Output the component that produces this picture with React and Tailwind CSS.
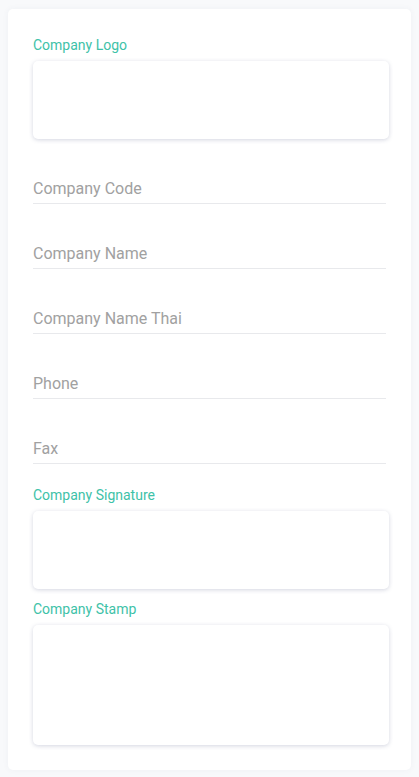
import React from "react";

function UploadBox({ label, height, className = "" }) {
  return (
    <div className={className}>
      <div className="text-[14px] leading-[20px] text-[#3ec2a8]">{label}</div>
      <div
        className={`mt-[6px] ${height} w-full rounded-[5px] bg-white shadow-[0_1px_4px_rgba(60,70,120,0.22)]`}
      />
    </div>
  );
}

function Field({ placeholder }) {
  return (
    <div className="mr-[3px] border-b border-[#e8e9ec] pt-[38px] pb-[2px]">
      <input
        placeholder={placeholder}
        className="block w-full bg-transparent text-[16px] leading-[24px] text-[#555] outline-none placeholder:text-[#a1a1a1]"
      />
    </div>
  );
}

export default function App() {
  const fields = ["Company Code", "Company Name", "Company Name Thai", "Phone", "Fax"];

  return (
    <div
      className="min-h-[777px] bg-[#f8f9fb] pt-[9px] pb-[7px]"
      style={{ fontFamily: "Roboto, 'Noto Sans', sans-serif" }}
    >
      <div className="mx-[8px] rounded-[5px] bg-white pt-[26px] pb-[25px] pl-[25px] pr-[22px] shadow-[0_0_6px_rgba(60,70,120,0.05)]">
        <UploadBox label="Company Logo" height="h-[78px]" />
        {fields.map((f) => (
          <Field key={f} placeholder={f} />
        ))}
        <UploadBox label="Company Signature" height="h-[78px]" className="mt-[21px]" />
        <UploadBox label="Company Stamp" height="h-[120px]" className="mt-[10px]" />
      </div>
    </div>
  );
}
